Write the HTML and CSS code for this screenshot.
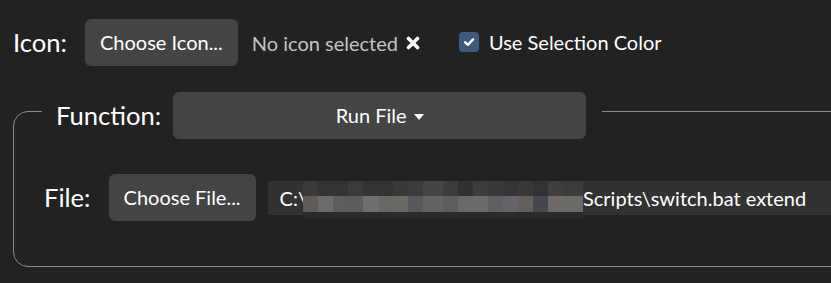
FILE: index.html
```html
<!DOCTYPE html>
<html lang="en">
<head>
  <meta charset="UTF-8" />
  <title>Button Settings</title>
  <link rel="stylesheet" href="styles.css">
</head>
<body>
<div class="page">
  <div class="icon-row">
    <span class="row-label">Icon:</span>
    <button class="btn">Choose Icon...</button>
    <span class="no-icon">No icon selected</span>
    <span class="clear-icon">
      <svg width="14" height="14" viewBox="0 0 14 14">
        <path d="M2.5 2.5 L11.5 11.5 M11.5 2.5 L2.5 11.5" stroke="#fff" stroke-width="3.6" stroke-linecap="round"/>
      </svg>
    </span>
    <label class="check">
      <span class="check-box">
        <svg width="14" height="14" viewBox="0 0 14 14">
          <path d="M3 7.2 L5.8 9.8 L11 4.4" fill="none" stroke="#fff" stroke-width="2.4" stroke-linecap="round" stroke-linejoin="round"/>
        </svg>
      </span>
      Use Selection Color
    </label>
  </div>

  <fieldset class="function-box">
    <legend>
      <span class="row-label">Function:</span>
      <button class="btn dropdown">Run File <span class="caret"></span></button>
    </legend>
    <div class="file-row">
      <span class="row-label">File:</span>
      <button class="btn">Choose File...</button>
      <div class="path-input">
        <span>C:\</span>
        <span class="redacted"></span>
        <span>Scripts\switch.bat extend</span>
      </div>
    </div>
  </fieldset>
</div>
</body>
</html>
```

FILE: styles.css
```css
body {
  margin: 0;
  background-color: #222;
  font-family: Lato, "Open Sans", sans-serif;
  color: #fff;
  overflow: hidden;
}

.page {
  padding: 19px 0 0 13px;
  width: 1000px;
}

.row-label {
  font-size: 25.6px;
  line-height: 47px;
}

.btn {
  font-family: inherit;
  font-size: 20px;
  line-height: 27px;
  padding: 10px 15px;
  border: none;
  border-radius: 6px;
  background-color: #444;
  color: #fff;
}

.icon-row {
  display: flex;
  align-items: center;
}

.icon-row .row-label {
  margin-right: 18px;
}

.no-icon {
  margin-left: 14px;
  font-size: 20px;
  color: #c4c4c4;
}

.clear-icon {
  display: flex;
  margin-left: 8px;
}

.check {
  display: flex;
  align-items: center;
  margin-left: 39px;
  font-size: 20px;
  margin-top: -2px;
}

.check-box {
  display: flex;
  align-items: center;
  justify-content: center;
  width: 20px;
  height: 20px;
  border-radius: 4px;
  background-color: #3b5a7e;
  margin-right: 10px;
}

.function-box {
  margin: 17px 0 0 0;
  padding: 0 0 45px 30px;
  border: 1px solid #8a8a8a;
  border-radius: 15px;
  width: 900px;
}

legend {
  display: flex;
  align-items: center;
  margin-left: -2px;
  padding: 9px 16px 0 14px;
}

legend .row-label {
  margin-right: 12px;
}

.dropdown {
  width: 413px;
  text-align: center;
}

.caret {
  display: inline-block;
  vertical-align: 3px;
  margin-left: 2px;
  border-top: 6px solid #fff;
  border-left: 5.5px solid transparent;
  border-right: 5.5px solid transparent;
}

.file-row {
  display: flex;
  align-items: center;
  margin-top: 35px;
}

.file-row .row-label {
  margin-right: 18px;
}

.path-input {
  display: flex;
  align-items: flex-start;
  margin-left: 12px;
  height: 34px;
  flex: 1;
  padding-left: 12px;
  background-color: #323232;
  font-size: 20px;
  line-height: 34px;
}

.redacted {
  display: block;
  width: 280px;
  height: 38px;
  margin-left: -4px;
  background:
    linear-gradient(90deg,
      #3a3a3a 0 15px, #333 15px 45px, #3b3b3b 45px 60px, #333 60px 90px, #383838 90px 105px,
      #3d3d3d 105px 120px, #454545 120px 140px, #3c3c3c 140px 155px, #323232 155px 170px,
      #3d3d3d 170px 185px, #383838 185px 200px, #353535 200px 215px, #383838 215px 230px,
      #333336 230px 245px, #403e3e 245px 260px, #3b3b3b 260px 280px) 0 0 / 280px 15px no-repeat,
    linear-gradient(90deg,
      #5f5c58 0 15px, #6a6c6e 15px 30px, #5e5d5b 30px 45px, #5c5c5a 45px 60px, #6e706f 60px 75px,
      #6a6866 75px 90px, #6a6966 90px 105px, #58575c 105px 120px, #626462 120px 140px,
      #5d5d5d 140px 155px, #686b6b 155px 170px, #6a6a68 170px 185px, #5e6061 185px 200px,
      #676469 200px 215px, #625f5d 215px 230px, #44474b 230px 245px, #6e6866 245px 260px,
      #6b6a67 260px 280px) 0 15px / 280px 16px no-repeat,
    #2b2b2b;
}
```
